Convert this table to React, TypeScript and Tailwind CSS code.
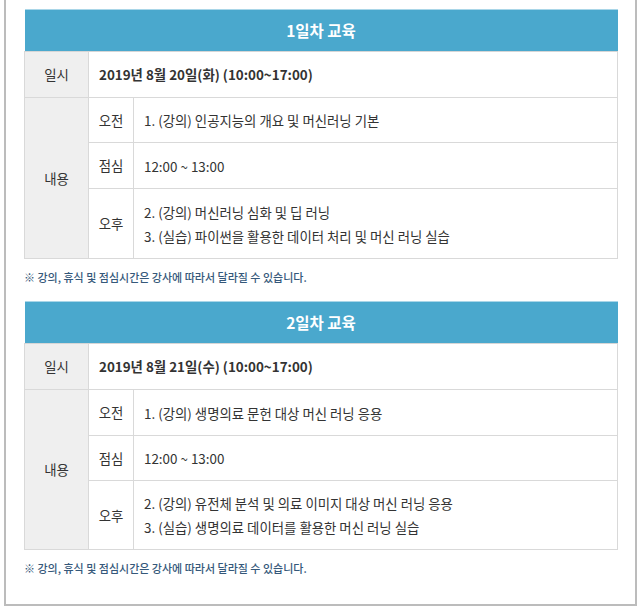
type Session = { label: string; lines: string[]; height: string };

type Day = {
  title: string;
  date: string;
  sessions: Session[];
};

const days: Day[] = [
  {
    title: "1일차 교육",
    date: "2019년 8월 20일(화) (10:00~17:00)",
    sessions: [
      { label: "오전", lines: ["1. (강의) 인공지능의 개요 및 머신러닝 기본"], height: "h-[45px]" },
      { label: "점심", lines: ["12:00 ~ 13:00"], height: "h-[46px]" },
      {
        label: "오후",
        lines: ["2. (강의) 머신러닝 심화 및 딥 러닝", "3. (실습) 파이썬을 활용한 데이터 처리 및 머신 러닝 실습"],
        height: "h-[70px]",
      },
    ],
  },
  {
    title: "2일차 교육",
    date: "2019년 8월 21일(수) (10:00~17:00)",
    sessions: [
      { label: "오전", lines: ["1. (강의) 생명의료 문헌 대상 머신 러닝 응용"], height: "h-[46px]" },
      { label: "점심", lines: ["12:00 ~ 13:00"], height: "h-[45px]" },
      {
        label: "오후",
        lines: ["2. (강의) 유전체 분석 및 의료 이미지 대상 머신 러닝 응용", "3. (실습) 생명의료 데이터를 활용한 머신 러닝 실습"],
        height: "h-[69px]",
      },
    ],
  },
];

function DayTable({ day }: { day: Day }) {
  return (
    <table className="w-full border-collapse table-fixed text-[13.4px] text-[#333]">
      <colgroup>
        <col className="w-[64px]" />
        <col className="w-[45px]" />
        <col />
      </colgroup>
      <thead>
        <tr className="h-[42px]">
          <th
            colSpan={3}
            className="bg-[#4aa8cd] border-t border-t-[#a9d6e8] border-b border-b-[#d6d6d6] text-center text-[15.5px] font-bold text-white"
          >
            {day.title}
          </th>
        </tr>
      </thead>
      <tbody>
        <tr className="h-[46px]">
          <th className="bg-[#efefef] border border-[#d9d9d9] font-normal text-center">일시</th>
          <td colSpan={2} className="border border-[#d9d9d9] pl-[10px] font-bold">
            {day.date}
          </td>
        </tr>
        {day.sessions.map((s, i) => (
          <tr key={s.label} className={s.height}>
            {i === 0 && (
              <th rowSpan={3} className="bg-[#efefef] border border-[#d9d9d9] font-normal text-center">
                내용
              </th>
            )}
            <td className="border border-[#d9d9d9] text-center">{s.label}</td>
            <td className="border border-[#d9d9d9] pl-[10px] leading-[24px]">
              {s.lines.map((l) => (
                <div key={l}>{l}</div>
              ))}
            </td>
          </tr>
        ))}
      </tbody>
    </table>
  );
}

export default function App() {
  return (
    <div
      className="bg-white h-[609px]"
      style={{ fontFamily: '"Noto Sans CJK KR", "Noto Sans", sans-serif' }}
    >
      <div className="ml-[4px] w-[633px] h-[606px] border-x-[2px] border-b-[2px] border-[#bcbcbc] pt-[9px] pl-[18px] pr-[17px]">
        {days.map((day, i) => (
          <section key={day.title} className={i > 0 ? "mt-[16px]" : ""}>
            <DayTable day={day} />
            <p className="mt-[10px] leading-[16px] text-[11px] font-medium text-[#35587a]">
              ※ 강의, 휴식 및 점심시간은 강사에 따라서 달라질 수 있습니다.
            </p>
          </section>
        ))}
      </div>
    </div>
  );
}
